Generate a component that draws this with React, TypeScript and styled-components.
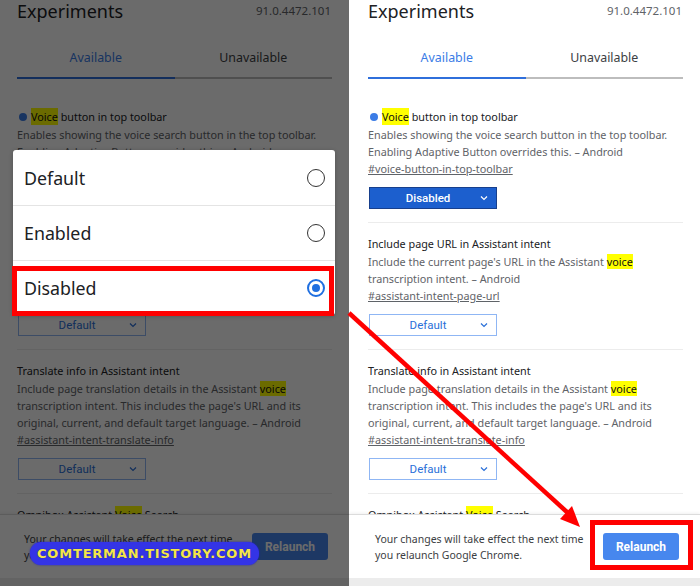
import React from "react";
import styled, { createGlobalStyle } from "styled-components";

const Global = createGlobalStyle`
  html, body { margin: 0; padding: 0; background: #fff; }
  body { width: 700px; height: 586px; overflow: hidden; font-family: "Noto Sans", Roboto, sans-serif; }
  * { box-sizing: border-box; }
`;

const Stage = styled.div`
  position: relative;
  width: 700px;
  height: 586px;
  display: flex;
  overflow: hidden;
`;

const Panel = styled.div<{ $w: number }>`
  position: relative;
  width: ${(p) => p.$w}px;
  height: 586px;
  overflow: hidden;
  flex: none;
`;

const Shifted = styled.div<{ $shift: number }>`
  margin-left: ${(p) => p.$shift}px;
`;

const Page = styled.div`
  width: 351px;
  height: 586px;
  display: flex;
  flex-direction: column;
  background: #fff;
`;

const Scroll = styled.div`
  flex: 1;
  min-height: 0;
  overflow: hidden;
  padding: 0 17px 0 19px;
`;

const Header = styled.div`
  display: flex;
  justify-content: space-between;
  align-items: center;
  height: 22px;
`;

const Title = styled.div`
  font-size: 18px;
  line-height: 22px;
  color: #202124;
  margin-top: -1px;
`;

const Version = styled.div`
  font-size: 11.5px;
  color: #5f6368;
  margin-top: -2px;
  margin-right: 1px;
`;

const Tabs = styled.div`
  display: flex;
  margin-top: 16px;
`;

const Tab = styled.div<{ $active?: boolean }>`
  flex: 1;
  height: 41px;
  display: flex;
  align-items: center;
  justify-content: center;
  font-size: 12.4px;
  color: ${(p) => (p.$active ? "#3b7ce6" : "#3c4043")};
  border-bottom: 2px solid ${(p) => (p.$active ? "#2f6fdb" : "#bdbdbd")};
`;

const Item = styled.div<{ $first?: boolean }>`
  padding: ${(p) => (p.$first ? "29px" : "12px")} 0 13px;
  border-bottom: 1px solid #ececec;
`;

const ItemTitle = styled.div`
  font-size: 10.8px;
  line-height: 17px;
  color: #202124;
  margin-bottom: 1px;
  display: flex;
  align-items: center;
`;

const Dot = styled.span`
  width: 8px;
  height: 8px;
  border-radius: 50%;
  background: #3b7ce6;
  margin: 0 4px 0 2px;
  flex: none;
`;

const Mark = styled.span`
  background: #ffff00;
  color: #111;
`;

const Desc = styled.div`
  font-size: 10.8px;
  line-height: 17px;
  color: #5f6368;
`;

const Link = styled.div`
  font-size: 10.8px;
  line-height: 17px;
  color: #5f6368;
  text-decoration: underline;
`;

const Select = styled.div<{ $on?: boolean }>`
  margin-top: 10px;
  margin-left: 1px;
  width: 128px;
  height: 22px;
  display: flex;
  align-items: center;
  padding: 0 8px 0 0;
  border: 1px solid ${(p) => (p.$on ? "#173f8c" : "#8fb6f4")};
  background: ${(p) => (p.$on ? "#1c5fce" : "#fff")};
  color: ${(p) => (p.$on ? "#fff" : "#2a6fd8")};
  font-family: Roboto, "Noto Sans", sans-serif;
  font-size: 11.5px;
  font-weight: ${(p) => (p.$on ? 500 : 400)};
`;

const SelectText = styled.span`
  flex: 1;
  text-align: center;
  padding-left: 6px;
`;

const Footer = styled.div`
  height: 64px;
  flex: none;
  display: flex;
  align-items: center;
  justify-content: space-between;
  padding: 0 21px 0 26px;
  border-top: 1px solid #dcdcdc;
  box-shadow: 0 -1px 3px rgba(0, 0, 0, 0.06);
  background: #fff;
`;

const FooterText = styled.div`
  font-size: 10.5px;
  line-height: 16px;
  color: #3c4043;
`;

const Relaunch = styled.div`
  width: 76px;
  height: 27px;
  border-radius: 3px;
  background: #4787ee;
  color: #fff;
  font-family: Roboto, sans-serif;
  font-weight: 700;
  font-size: 12px;
  display: flex;
  align-items: center;
  justify-content: center;
`;

const Strip = styled.div`
  height: 8px;
  flex: none;
  background: #ececec;
`;

const Dim = styled.div`
  position: absolute;
  inset: 0;
  background: rgba(0, 0, 0, 0.58);
`;

const Dialog = styled.div`
  position: absolute;
  left: 13px;
  top: 150px;
  width: 322px;
  background: #fff;
  border-radius: 3px;
  box-shadow: 0 1px 4px rgba(0, 0, 0, 0.25);
  display: flex;
  flex-direction: column;
`;

const Option = styled.div`
  height: 55px;
  display: flex;
  align-items: center;
  justify-content: space-between;
  padding: 0 10px 0 11px;
  font-size: 17.8px;
  color: #202124;
  & + & {
    border-top: 1px solid #e4e4e4;
  }
`;

const Radio = styled.span<{ $on?: boolean }>`
  width: 18px;
  height: 18px;
  border-radius: 50%;
  border: ${(p) => (p.$on ? "2px solid #1f6fe0" : "1.6px solid #333")};
  display: flex;
  align-items: center;
  justify-content: center;
  &::after {
    content: "";
    width: 8px;
    height: 8px;
    border-radius: 50%;
    background: ${(p) => (p.$on ? "#1f6fe0" : "transparent")};
  }
`;

const RedBox = styled.div<{ $x: number; $y: number; $w: number; $h: number }>`
  position: absolute;
  left: ${(p) => p.$x}px;
  top: ${(p) => p.$y}px;
  width: ${(p) => p.$w}px;
  height: ${(p) => p.$h}px;
  border: 5px solid #ff0000;
`;

const ArrowLayer = styled.svg`
  position: absolute;
  left: 0;
  top: 0;
  pointer-events: none;
`;

const Watermark = styled.div`
  position: absolute;
  left: 30px;
  top: 542px;
  width: 229px;
  height: 23px;
  border-radius: 11px;
  background: #3434e6;
  box-shadow: 0 0 2px #2020c0;
  display: flex;
  align-items: center;
  justify-content: center;
  font-family: "DejaVu Sans", sans-serif;
  font-weight: 700;
  font-size: 13px;
  letter-spacing: 0.8px;
  color: #f4e64a;
  text-shadow: 0 0 1px #1a1a80;
  white-space: nowrap;
`;

const Chevron = ({ color }: { color: string }) => (
  <svg width="8" height="6" viewBox="0 0 8 6">
    <polyline points="1,1.5 4,4.5 7,1.5" fill="none" stroke={color} strokeWidth="1.2" />
  </svg>
);

const Content = () => (
  <Page>
    <Scroll>
      <Header>
        <Title>Experiments</Title>
        <Version>91.0.4472.101</Version>
      </Header>
      <Tabs>
        <Tab $active>Available</Tab>
        <Tab>Unavailable</Tab>
      </Tabs>
      <Item $first>
        <ItemTitle>
          <Dot />
          <Mark>Voice</Mark>&nbsp;button in top toolbar
        </ItemTitle>
        <Desc>
          Enables showing the voice search button in the top toolbar.
          <br />
          Enabling Adaptive Button overrides this. – Android
        </Desc>
        <Link>#voice-button-in-top-toolbar</Link>
        <Select $on>
          <SelectText>Disabled</SelectText>
          <Chevron color="#fff" />
        </Select>
      </Item>
      <Item>
        <ItemTitle>Include page URL in Assistant intent</ItemTitle>
        <Desc>
          Include the current page's URL in the Assistant <Mark>voice</Mark>
          <br />
          transcription intent. – Android
        </Desc>
        <Link>#assistant-intent-page-url</Link>
        <Select>
          <SelectText>Default</SelectText>
          <Chevron color="#2a6fd8" />
        </Select>
      </Item>
      <Item>
        <ItemTitle>Translate info in Assistant intent</ItemTitle>
        <Desc>
          Include page translation details in the Assistant <Mark>voice</Mark>
          <br />
          transcription intent. This includes the page's URL and its
          <br />
          original, current, and default target language. – Android
        </Desc>
        <Link>#assistant-intent-translate-info</Link>
        <Select>
          <SelectText>Default</SelectText>
          <Chevron color="#2a6fd8" />
        </Select>
      </Item>
      <Item>
        <ItemTitle>
          Omnibox Assistant&nbsp;<Mark>Voice</Mark>&nbsp;Search
        </ItemTitle>
      </Item>
    </Scroll>
    <Footer>
      <FooterText>
        Your changes will take effect the next time
        <br />
        you relaunch Google Chrome.
      </FooterText>
      <Relaunch>Relaunch</Relaunch>
    </Footer>
    <Strip />
  </Page>
);

export default function App() {
  return (
    <>
      <Global />
      <Stage>
        <Panel $w={349}>
          <Shifted $shift={-2}>
            <Content />
          </Shifted>
          <Dim />
          <Dialog>
            <Option>
              Default
              <Radio />
            </Option>
            <Option>
              Enabled
              <Radio />
            </Option>
            <Option>
              Disabled
              <Radio $on />
            </Option>
          </Dialog>
        </Panel>
        <Panel $w={351}>
          <Content />
        </Panel>
        <RedBox $x={12} $y={266} $w={322} $h={50} />
        <RedBox $x={590} $y={520} $w={103} $h={50} />
        <ArrowLayer width="700" height="586" viewBox="0 0 700 586">
          <line x1="349" y1="313" x2="568" y2="513" stroke="#ff0000" strokeWidth="4.5" />
          <polygon points="580,527 560,519 572,506" fill="#ff0000" />
        </ArrowLayer>
        <Watermark>COMTERMAN.TISTORY.COM</Watermark>
      </Stage>
    </>
  );
}
